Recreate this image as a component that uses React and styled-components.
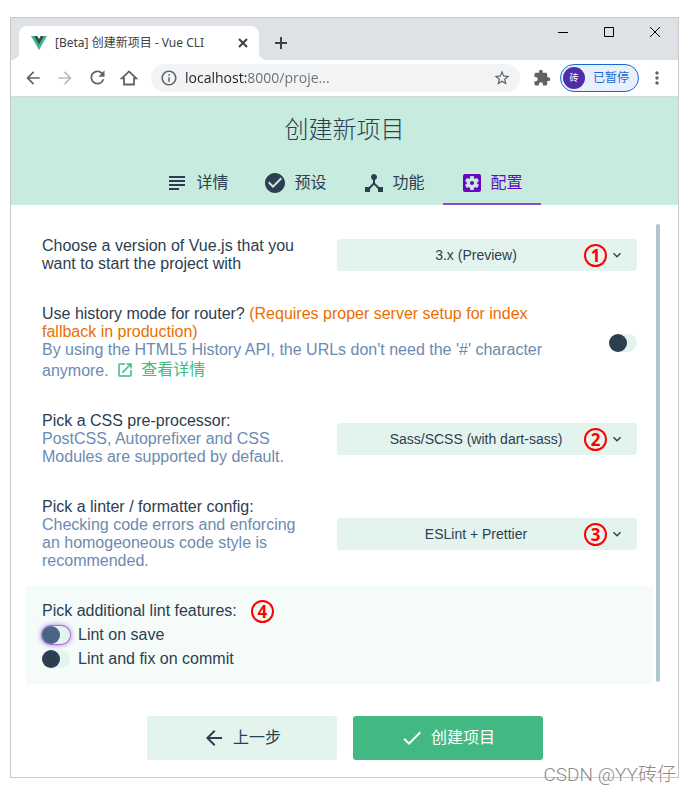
import React, { useState } from "react";
import styled, { createGlobalStyle, css } from "styled-components";
import {
  MdSubject,
  MdCheckCircle,
  MdDeviceHub,
  MdOpenInNew,
  MdArrowBack,
  MdArrowForward,
  MdRefresh,
  MdInfoOutline,
  MdStarBorder,
  MdExtension,
  MdMoreVert,
  MdCheck,
  MdKeyboardArrowDown,
} from "react-icons/md";

const uiFont = `"Liberation Sans", "Noto Sans CJK SC", sans-serif`;
const chromeFont = `"Open Sans", "Noto Sans CJK SC", sans-serif`;

const GlobalStyle = createGlobalStyle`
  *, *::before, *::after { box-sizing: border-box; }
  body { margin: 0; background: #fff; color: #2c3e50; font: 16px/18px ${uiFont}; }
  button, input, select { font: inherit; color: inherit; }
  button { cursor: pointer; }
`;

const Page = styled.div`
  position: relative;
  padding: 17px 12px 16px 10px;
`;

const BrowserWindow = styled.div`
  border: 1px solid #c8c8c8;
  background: #fff;
`;

const TitleBar = styled.div`
  display: flex;
  align-items: flex-end;
  height: 42px;
  padding-left: 8px;
  background: #dee1e6;
`;

const BrowserTab = styled.div`
  position: relative;
  display: flex;
  align-items: center;
  width: 240px;
  height: 34px;
  padding: 0 8px 0 12px;
  border-radius: 8px 8px 0 0;
  background: #fff;
  color: #3c4043;
  font: 12px/16px "Noto Sans", "Noto Sans CJK SC", sans-serif;

  &::before,
  &::after {
    content: "";
    position: absolute;
    bottom: 0;
    width: 8px;
    height: 8px;
  }
  &::before {
    left: -8px;
    background: radial-gradient(circle at 0 0, transparent 8px, #fff 8px);
  }
  &::after {
    right: -8px;
    background: radial-gradient(circle at 100% 0, transparent 8px, #fff 8px);
  }
`;

const TabTitle = styled.span`
  flex: 1;
  margin-left: 8px;
  white-space: nowrap;
`;

const IconButton = styled.button`
  display: flex;
  align-items: center;
  justify-content: center;
  flex: none;
  width: ${(p) => p.$width || 32}px;
  height: ${(p) => p.$height || 28}px;
  padding: 0;
  border: 0;
  background: none;
  color: ${(p) => p.$color || "#5f6368"};
`;

const NewTab = styled(IconButton)`
  align-self: center;
  margin: 8px 0 0 6px;
`;

const WindowControls = styled.div`
  display: flex;
  align-self: flex-start;
  margin-left: auto;
`;

const Toolbar = styled.div`
  display: flex;
  align-items: center;
  height: 37px;
  padding: 0 9px 1px 6px;
  border-bottom: 1px solid #d5d8dc;
`;

const AddressBar = styled.label`
  display: flex;
  align-items: center;
  flex: 1;
  min-width: 0;
  height: 28px;
  margin: 0 6px;
  padding: 0 9px;
  gap: 7px;
  border-radius: 14px;
  background: #f1f3f4;
  color: #5f6368;

  svg { flex: none; }
`;

const AddressInput = styled.input`
  flex: 1;
  min-width: 0;
  padding: 0;
  border: 0;
  outline: 0;
  background: linear-gradient(90deg, #202124 62px, #6b6f74 62px);
  background-clip: text;
  color: transparent;
  font: 14px/20px ${chromeFont};
`;

const ProfileButton = styled.button`
  display: flex;
  align-items: center;
  gap: 8px;
  height: 28px;
  margin: 0 6px 0 2px;
  padding: 0 9px 0 2px;
  border: 1px solid #1967d2;
  border-radius: 14px;
  background: #e8f0fe;
  color: #1967d2;
  font: 12px/16px ${chromeFont};
`;

const Avatar = styled.span`
  width: 22px;
  height: 22px;
  border-radius: 50%;
  background: #512da8;
  color: #fff;
  font-size: 9px;
  line-height: 22px;
  text-align: center;
`;

const Header = styled.header`
  background: #c8ebdf;
`;

const Title = styled.h1`
  margin: 0;
  padding-top: 2px;
  font-size: 24px;
  font-weight: 300;
  line-height: 62px;
  text-align: center;
`;

const Tabs = styled.nav`
  display: flex;
  justify-content: center;
`;

const TabLink = styled.a`
  display: flex;
  align-items: center;
  gap: 7px;
  height: 44px;
  padding: 0 18px 0 17px;
  color: ${(p) => (p.$active ? "#6806c1" : "#2c3e50")};
  box-shadow: ${(p) => (p.$active ? "inset 0 -2px #8a4bc8" : "none")};
  text-decoration: none;
`;

const Main = styled.main`
  display: grid;
  grid-template-columns: 1fr 4px;
  gap: 3px;
  padding: 16px 18px 32px 15px;
`;

const ScrollThumb = styled.div`
  margin: 3px 0 2px;
  border-radius: 2px;
  background: #b1c5d0;
`;

const Row = styled.section`
  display: flex;
  align-items: center;
  gap: 32px;
  padding: 16px;
  background: ${(p) => (p.$shaded ? "#f4fbf9" : "transparent")};
`;

const Info = styled.div`
  flex: 1;
  min-width: 0;
`;

const Description = styled.div`
  color: #6b8bb0;
`;

const Warning = styled.span`
  color: #ea6e00;
`;

const MoreLink = styled.a`
  display: inline-flex;
  align-items: center;
  gap: 7px;
  height: 21px;
  margin-left: 3px;
  vertical-align: bottom;
  color: #42b983;
  text-decoration: none;
`;

const SelectBox = styled.div`
  position: relative;
  width: 300px;
`;

const Select = styled.select`
  appearance: none;
  display: block;
  width: 100%;
  height: 32px;
  padding: 0 38px 0 16px;
  border: 0;
  border-radius: 3px;
  background: #e3f4ee;
  font-size: 14px;
  text-align-last: center;
`;

const SelectArrow = styled(MdKeyboardArrowDown)`
  position: absolute;
  top: 8px;
  right: 12px;
  pointer-events: none;
`;

const Marker = styled.span`
  display: inline-block;
  width: 23px;
  height: 23px;
  border: 2px solid #f00;
  border-radius: 50%;
  color: #f00;
  font: bold 17px/19px "Noto Sans", sans-serif;
  text-align: center;
  pointer-events: none;
  ${(p) =>
    p.$overlay &&
    css`
      position: absolute;
      top: 5px;
      right: 30px;
    `}
`;

const GroupTitle = styled.div`
  display: flex;
  align-items: center;
  gap: 14px;
  height: 18px;
`;

const Option = styled.label`
  display: flex;
  align-items: center;
  gap: 8px;
  margin-top: 6px;
`;

const Switch = styled.input.attrs({ type: "checkbox" })`
  appearance: none;
  flex: none;
  width: 28px;
  height: 18px;
  margin: 0;
  border-radius: 9px;
  background: #e3f4ee;
  box-shadow: ${(p) => (p.$ring ? "0 0 0 1px #a574dc, 0 0 5px 1px #a574dc" : "none")};

  &::before {
    content: "";
    display: block;
    width: 18px;
    height: 18px;
    border-radius: 50%;
    background: ${(p) => (p.$ring ? "#4a6583" : "#2c3e50")};
  }
  &:checked::before {
    margin-left: 10px;
    background: #42b983;
  }
`;

const Footer = styled.footer`
  display: flex;
  justify-content: center;
  gap: 16px;
  padding-bottom: 17px;
`;

const ActionButton = styled.button`
  display: flex;
  align-items: center;
  justify-content: center;
  gap: 7px;
  width: 190px;
  height: 44px;
  padding: 0;
  border: 0;
  border-radius: 3px;
  background: ${(p) => (p.$primary ? "#42b983" : "#e3f4ee")};
  color: ${(p) => (p.$primary ? "#fff" : "#2c3e50")};
`;

const Watermark = styled.div`
  position: absolute;
  right: 15px;
  bottom: 6px;
  color: #8a8a8a;
  font: 300 19px/26px Roboto, "Noto Sans CJK SC", sans-serif;
  text-shadow: 1px 1px 1px #fff;
`;

function VueLogo() {
  return (
    <svg width="16" height="14" viewBox="0 0 256 221" aria-hidden="true">
      <path d="M204.8 0H256L128 220.8 0 0h97.9L128 51.2 157.4 0z" fill="#41b883" />
      <path d="M50.6 0 128 133.1 204.8 0h-47.4L128 51.2 97.3 0z" fill="#35495e" />
    </svg>
  );
}

function HomeIcon() {
  return (
    <svg width="18" height="18" viewBox="0 0 18 18" aria-hidden="true">
      <path
        d="M1.8 9.3 9 2.4 16.2 9.3H14V15.5H4V9.3Z"
        fill="none"
        stroke="currentColor"
        strokeWidth="1.8"
      />
    </svg>
  );
}

function GearBoxIcon({ size }) {
  return (
    <svg width={size} height={size} viewBox="0 0 24 24" fill="currentColor" aria-hidden="true">
      <path d="M12 10c-1.1 0-2 .9-2 2s.9 2 2 2 2-.9 2-2-.9-2-2-2zm7-7H5c-1.11 0-2 .9-2 2v14c0 1.1.89 2 2 2h14c1.11 0 2-.9 2-2V5c0-1.1-.89-2-2-2zm-1.75 9c0 .23-.02.46-.05.68l1.48 1.16c.13.11.17.3.08.45l-1.4 2.42c-.09.15-.27.21-.43.15l-1.74-.7c-.36.28-.76.51-1.18.69l-.26 1.85c-.03.17-.18.3-.35.3h-2.8c-.17 0-.32-.13-.35-.29l-.26-1.85c-.43-.18-.82-.41-1.18-.69l-1.74.7c-.16.06-.34 0-.43-.15l-1.4-2.42c-.09-.15-.05-.34.08-.45l1.48-1.16c-.03-.23-.05-.46-.05-.69 0-.23.02-.46.05-.68l-1.48-1.16c-.13-.11-.17-.3-.08-.45l1.4-2.42c.09-.15.27-.21.43-.15l1.74.7c.36-.28.76-.51 1.18-.69l.26-1.85c.03-.17.18-.3.35-.3h2.8c.17 0 .32.13.35.29l.26 1.85c.43.18.82.41 1.18.69l1.74-.7c.16-.06.34 0 .43.15l1.4 2.42c.09.15.05.34-.08.45l-1.48 1.16c.03.23.05.46.05.69z" />
    </svg>
  );
}

function LineIcon({ d, size = 12, width = 2 }) {
  return (
    <svg width={size} height={size} viewBox={`0 0 ${size} ${size}`} aria-hidden="true">
      <path d={d} fill="none" stroke="currentColor" strokeWidth={width} />
    </svg>
  );
}

const steps = [
  { label: "详情", Icon: MdSubject },
  { label: "预设", Icon: MdCheckCircle },
  { label: "功能", Icon: MdDeviceHub },
  { label: "配置", Icon: GearBoxIcon, active: true },
];

function Choice({ labelId, number, options }) {
  return (
    <SelectBox>
      <Select aria-labelledby={labelId}>
        {options.map((option) => (
          <option key={option}>{option}</option>
        ))}
      </Select>
      <Marker $overlay>{number}</Marker>
      <SelectArrow size={16} />
    </SelectBox>
  );
}

function Browser() {
  const [url, setUrl] = useState("localhost:8000/proje...");
  return (
    <>
      <TitleBar>
        <BrowserTab>
          <VueLogo />
          <TabTitle>[Beta] 创建新项目 - Vue CLI</TabTitle>
          <IconButton $width={16} $height={16} $color="#3c4043" aria-label="Close tab">
            <LineIcon size={10} d="M1 1 9 9M9 1 1 9" />
          </IconButton>
        </BrowserTab>
        <NewTab $color="#3c4043" aria-label="New tab">
          <LineIcon d="M6 0V12M0 6H12" />
        </NewTab>
        <WindowControls>
          <IconButton $width={46} $color="#000" aria-label="Minimize">
            <LineIcon size={10} width={1} d="M0 5.5H10" />
          </IconButton>
          <IconButton $width={46} $color="#000" aria-label="Maximize">
            <LineIcon size={10} width={1} d="M.5 .5H9.5V9.5H.5Z" />
          </IconButton>
          <IconButton $width={46} $color="#000" aria-label="Close">
            <LineIcon size={10} width={1} d="M0 0 10 10M10 0 0 10" />
          </IconButton>
        </WindowControls>
      </TitleBar>
      <Toolbar>
        <IconButton aria-label="Back"><MdArrowBack size={20} /></IconButton>
        <IconButton $color="#babcbe" aria-label="Forward"><MdArrowForward size={20} /></IconButton>
        <IconButton aria-label="Reload"><MdRefresh size={21} /></IconButton>
        <IconButton aria-label="Home"><HomeIcon /></IconButton>
        <AddressBar>
          <MdInfoOutline size={18} />
          <AddressInput aria-label="Address" value={url} onChange={(e) => setUrl(e.target.value)} />
          <MdStarBorder size={18} />
        </AddressBar>
        <IconButton aria-label="Extensions"><MdExtension size={18} /></IconButton>
        <ProfileButton>
          <Avatar>砖</Avatar>
          已暂停
        </ProfileButton>
        <IconButton $width={24} aria-label="Menu"><MdMoreVert size={20} /></IconButton>
      </Toolbar>
    </>
  );
}

export default function App() {
  return (
    <Page>
      <GlobalStyle />
      <BrowserWindow>
        <Browser />
        <Header>
          <Title>创建新项目</Title>
          <Tabs>
            {steps.map(({ label, Icon, active }) => (
              <TabLink key={label} href="#" $active={active}>
                <Icon size={24} />
                {label}
              </TabLink>
            ))}
          </Tabs>
        </Header>
        <Main>
          <div>
            <Row>
              <Info id="version">Choose a version of Vue.js that you want to start the project with</Info>
              <Choice labelId="version" number="1" options={["3.x (Preview)", "2.x"]} />
            </Row>
            <Row>
              <Info>
                <label htmlFor="history">Use history mode for router?</label>{" "}
                <Warning>(Requires proper server setup for index fallback in production)</Warning>
                <Description>
                  By using the HTML5 History API, the URLs don't need the '#' character anymore.{" "}
                  <MoreLink href="#">
                    <MdOpenInNew size={18} />
                    查看详情
                  </MoreLink>
                </Description>
              </Info>
              <Switch id="history" />
            </Row>
            <Row>
              <Info>
                <div id="css">Pick a CSS pre-processor:</div>
                <Description>PostCSS, Autoprefixer and CSS Modules are supported by default.</Description>
              </Info>
              <Choice labelId="css" number="2" options={["Sass/SCSS (with dart-sass)", "Less", "Stylus"]} />
            </Row>
            <Row>
              <Info>
                <div id="linter">Pick a linter / formatter config:</div>
                <Description>
                  Checking code errors and enforcing an homogeoneous code style is recommended.
                </Description>
              </Info>
              <Choice labelId="linter" number="3" options={["ESLint + Prettier", "ESLint + Airbnb"]} />
            </Row>
            <Row $shaded>
              <Info>
                <GroupTitle>
                  Pick additional lint features:
                  <Marker>4</Marker>
                </GroupTitle>
                <Option>
                  <Switch $ring />
                  Lint on save
                </Option>
                <Option>
                  <Switch />
                  Lint and fix on commit
                </Option>
              </Info>
            </Row>
          </div>
          <ScrollThumb />
        </Main>
        <Footer>
          <ActionButton>
            <MdArrowBack size={24} />
            上一步
          </ActionButton>
          <ActionButton $primary>
            <MdCheck size={24} />
            创建项目
          </ActionButton>
        </Footer>
      </BrowserWindow>
      <Watermark>CSDN @YY砖仔</Watermark>
    </Page>
  );
}
